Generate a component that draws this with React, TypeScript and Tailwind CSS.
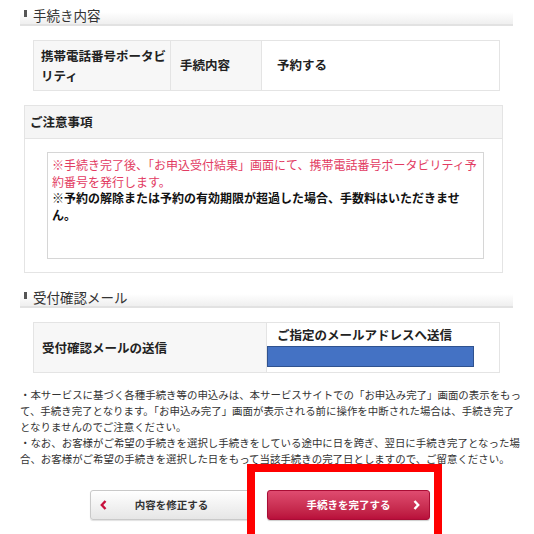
import React from "react";

const font = { fontFamily: '"Noto Sans CJK JP", "Noto Sans", sans-serif' };

function Heading({ children }: { children: React.ReactNode }) {
  return (
    <div className="flex h-[26px] w-[493px] items-start border-b-2 border-[#e2e2e2] bg-gradient-to-b from-white via-white to-[#efefef] pl-[4px] pt-[6px]">
      <span className="mt-[4px] mr-[6px] h-[7px] w-[3px] bg-[#555]" />
      <span className="text-[13.5px] leading-[18px] text-[#333]">{children}</span>
    </div>
  );
}

function ChevronLeft({ color }: { color: string }) {
  return (
    <svg width="7" height="10" viewBox="0 0 7 10">
      <path d="M5.5 1 L1.8 5 L5.5 9" fill="none" stroke={color} strokeWidth="2.4" />
    </svg>
  );
}
function ChevronRight({ color }: { color: string }) {
  return (
    <svg width="7" height="10" viewBox="0 0 7 10">
      <path d="M1.5 1 L5.2 5 L1.5 9" fill="none" stroke={color} strokeWidth="2.4" />
    </svg>
  );
}

export default function App() {
  return (
    <div className="relative h-[534px] w-[534px] overflow-hidden bg-white text-[#222]" style={font}>
      <div className="flex flex-col pl-[20px]">
        <Heading>手続き内容</Heading>

        <div className="ml-[13px] mt-[14px] flex h-[51px] w-[467px] border border-[#e4e4e4] text-[12.5px] font-bold">
          <div className="flex w-[137px] items-center border-r border-[#e4e4e4] bg-[#f7f7f7] pl-[7px] leading-[20px]">
            携帯電話番号ポータビ
            <br />
            リティ
          </div>
          <div className="flex w-[91px] items-center border-r border-[#e4e4e4] bg-[#f7f7f7] pl-[9px]">
            手続内容
          </div>
          <div className="flex flex-1 items-center bg-white pl-[15px]">予約する</div>
        </div>

        <div className="ml-[4px] mt-[14px] flex h-[168px] w-[479px] flex-col border border-[#e4e4e4]">
          <div className="flex h-[33px] items-center border-b border-[#e4e4e4] bg-[#f5f5f5] pl-[5px] text-[12.5px] font-bold">
            ご注意事項
          </div>
          <div className="ml-[22px] mt-[13px] h-[107px] w-[437px] border border-[#d6d6d6] pl-[4px] pt-[4px] text-[12px] leading-[16.5px]">
            <div className="whitespace-nowrap text-[#e23b62]">
              ※手続き完了後、「お申込受付結果」画面にて、携帯電話番号ポータビリティ予
              <br />
              約番号を発行します。
            </div>
            <div className="whitespace-nowrap font-bold text-[#111]">
              ※予約の解除または予約の有効期限が超過した場合、手数料はいただきませ
              <br />
              ん。
            </div>
          </div>
        </div>

        <div className="mt-[9px]">
          <Heading>受付確認メール</Heading>
        </div>

        <div className="ml-[13px] mt-[14px] flex h-[51px] w-[467px] border border-[#e4e4e4] text-[12.5px] font-bold">
          <div className="flex w-[233px] items-center border-r border-[#e4e4e4] bg-[#f7f7f7] pl-[8px] pt-[2px]">
            受付確認メールの送信
          </div>
          <div className="flex flex-1 flex-col bg-white">
            <div className="pl-[10px] pt-[3px] leading-[18px]">ご指定のメールアドレスへ送信</div>
            <div className="mt-[2px] h-[21px] w-[207px] border border-[#2f528f] bg-[#4472c4]" />
          </div>
        </div>

        <div className="mt-[14px] whitespace-nowrap text-[10.45px] leading-[16px] text-[#333]">
          ・本サービスに基づく各種手続き等の申込みは、本サービスサイトでの「お申込み完了」画面の表示をもっ
          <br />
          て、手続き完了となります。「お申込み完了」画面が表示される前に操作を中断された場合は、手続き完了
          <br />
          となりませんのでご注意ください。
          <br />
          ・なお、お客様がご希望の手続きを選択し手続きをしている途中に日を跨ぎ、翌日に手続き完了となった場
          <br />
          合、お客様がご希望の手続きを選択した日をもって当該手続きの完了日としますので、ご留意ください。
        </div>

        <div className="ml-[70px] mt-[23px] flex gap-[14px]">
          <div className="flex h-[30px] w-[163px] items-center rounded-[3px] border border-[#c9c9c9] bg-gradient-to-b from-white to-[#e6e6e6] px-[9px] shadow-[0_1px_1px_rgba(0,0,0,0.12)]">
            <ChevronLeft color="#c8103c" />
            <span className="flex-1 text-center text-[10.5px] font-bold text-[#333]">内容を修正する</span>
            <span className="w-[7px]" />
          </div>
          <div className="flex h-[30px] w-[163px] items-center rounded-[3px] border border-[#a90d35] bg-gradient-to-b from-[#df4b70] to-[#b90e3b] px-[9px] shadow-[0_1px_1px_rgba(0,0,0,0.2)]">
            <span className="w-[7px]" />
            <span className="flex-1 text-center text-[10.5px] font-bold text-white">手続きを完了する</span>
            <ChevronRight color="#ffffff" />
          </div>
        </div>
      </div>

      <div className="pointer-events-none absolute left-[247px] top-[464px] h-[90px] w-[195px] border-[8px] border-[#ff0000]" />
    </div>
  );
}
